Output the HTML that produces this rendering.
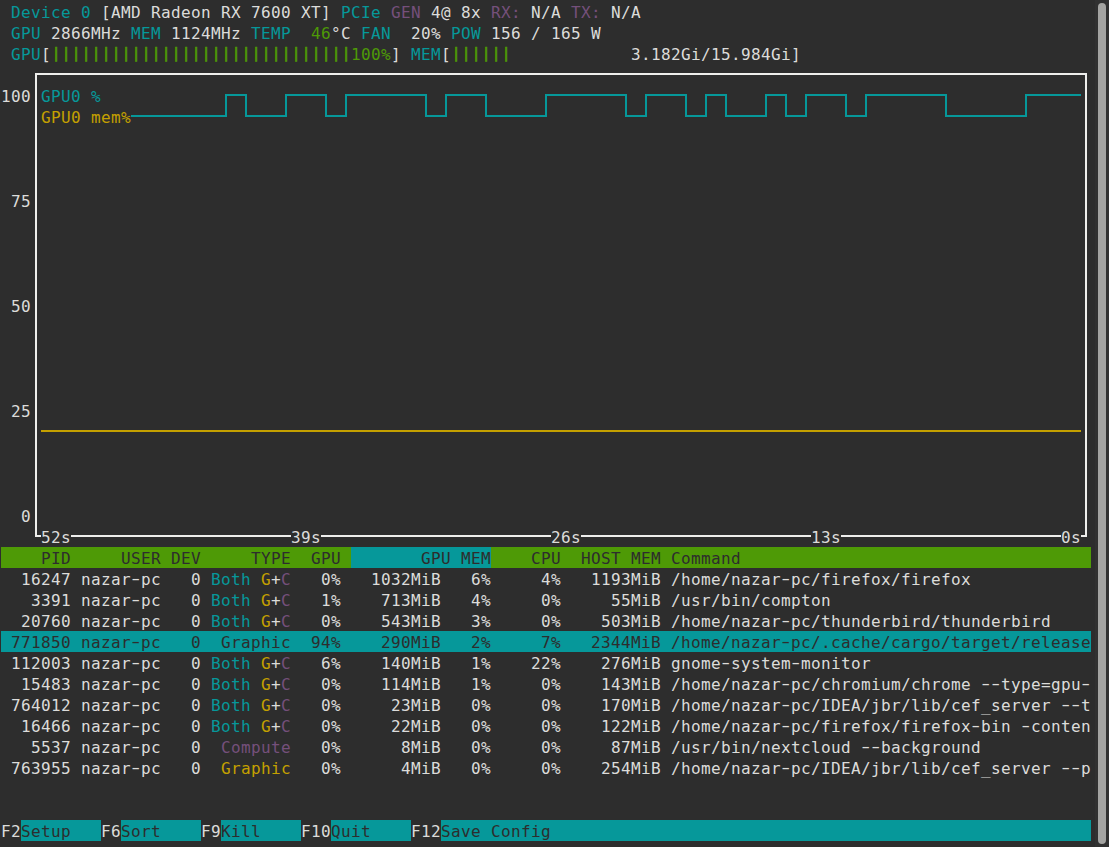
<!DOCTYPE html>
<html><head><meta charset="utf-8"><title>nvtop</title>
<style>
html,body{margin:0;padding:0;background:#2d2d2d;}
body{width:1109px;height:847px;position:relative;overflow:hidden;font-family:"DejaVu Sans Mono", "Liberation Mono", monospace;font-size:16px;}
.b{position:absolute;}
.t{position:absolute;white-space:pre;line-height:21px;height:21px;letter-spacing:0.3672px;font-family:"DejaVu Sans Mono", "Liberation Mono", monospace;font-size:16px;}
#plot{position:absolute;left:0;top:0;}
.t i{display:inline-block;font-style:normal;transform:translateY(-1px) scaleX(1.55);}
.bars{transform:translate(0.3px,-1.7px) scaleY(0.88);transform-origin:50% 50%;-webkit-text-stroke:0.7px currentColor;}
#trough{position:absolute;left:1095px;top:0;width:14px;height:847px;background:#313131;}
#thumb{position:absolute;left:1098px;top:3px;width:8px;height:841px;border-radius:4px;background:#a4a4a2;}
</style></head><body>
<svg id="plot" width="1109" height="847" viewBox="0 0 1109 847" shape-rendering="crispEdges">
<path d="M41 536 H36 V74 H1086 V536 H1081" fill="none" stroke="#eeeeec" stroke-width="2" stroke-linejoin="miter"/>
<path d="M71 536H291 M321 536H551 M581 536H811 M841 536H1061" fill="none" stroke="#eeeeec" stroke-width="2"/>
<path d="M41 431H1081" fill="none" stroke="#c4a000" stroke-width="2"/>
<path d="M131 116H226V95H246V116H286V95H326V116H346V95H426V116H446V95H486V116H546V95H626V116H646V95H686V116H706V95H726V116H766V95H786V116H806V95H846V116H866V95H946V116H1026V95H1081" fill="none" stroke="#06989a" stroke-width="2" stroke-linejoin="miter"/>
</svg>
<div id="trough"></div><div id="thumb"></div>
<span class="t" style="left:11px;top:2px;color:#06989a">Device 0</span>
<span class="t" style="left:101px;top:2px;color:#dcdcda">[AMD Radeon RX 7600 XT]</span>
<span class="t" style="left:341px;top:2px;color:#06989a">PCIe</span>
<span class="t" style="left:391px;top:2px;color:#75507b">GEN</span>
<span class="t" style="left:431px;top:2px;color:#dcdcda">4@ 8x</span>
<span class="t" style="left:491px;top:2px;color:#75507b">RX:</span>
<span class="t" style="left:531px;top:2px;color:#dcdcda">N/A</span>
<span class="t" style="left:571px;top:2px;color:#75507b">TX:</span>
<span class="t" style="left:611px;top:2px;color:#dcdcda">N/A</span>
<span class="t" style="left:11px;top:23px;color:#06989a">GPU</span>
<span class="t" style="left:51px;top:23px;color:#dcdcda">2866MHz</span>
<span class="t" style="left:131px;top:23px;color:#06989a">MEM</span>
<span class="t" style="left:171px;top:23px;color:#dcdcda">1124MHz</span>
<span class="t" style="left:251px;top:23px;color:#06989a">TEMP</span>
<span class="t" style="left:311px;top:23px;color:#4e9a06">46</span>
<span class="t" style="left:331px;top:23px;color:#dcdcda">°C</span>
<span class="t" style="left:361px;top:23px;color:#06989a">FAN</span>
<span class="t" style="left:411px;top:23px;color:#dcdcda">20%</span>
<span class="t" style="left:451px;top:23px;color:#06989a">POW</span>
<span class="t" style="left:491px;top:23px;color:#dcdcda">156 / 165 W</span>
<span class="t" style="left:11px;top:44px;color:#06989a">GPU</span>
<span class="t" style="left:41px;top:44px;color:#dcdcda">[</span>
<span class="t bars" style="left:51px;top:44px;color:#4e9a06">||||||||||||||||||||||||||||||</span>
<span class="t" style="left:351px;top:44px;color:#4e9a06">100%</span>
<span class="t" style="left:391px;top:44px;color:#dcdcda">]</span>
<span class="t" style="left:411px;top:44px;color:#06989a">MEM</span>
<span class="t" style="left:441px;top:44px;color:#dcdcda">[</span>
<span class="t bars" style="left:451px;top:44px;color:#4e9a06">||||||</span>
<span class="t" style="left:631px;top:44px;color:#dcdcda">3.182Gi/15.984Gi]</span>
<span class="t" style="left:1px;top:86px;color:#dcdcda">100</span>
<span class="t" style="left:11px;top:191px;color:#dcdcda">75</span>
<span class="t" style="left:11px;top:296px;color:#dcdcda">50</span>
<span class="t" style="left:11px;top:401px;color:#dcdcda">25</span>
<span class="t" style="left:21px;top:506px;color:#dcdcda">0</span>
<span class="t" style="left:41px;top:86px;color:#06989a">GPU0 %</span>
<span class="t" style="left:41px;top:107px;color:#c4a000">GPU0 mem%</span>
<span class="t" style="left:41px;top:527px;color:#dcdcda">52s</span>
<span class="t" style="left:291px;top:527px;color:#dcdcda">39s</span>
<span class="t" style="left:551px;top:527px;color:#dcdcda">26s</span>
<span class="t" style="left:811px;top:527px;color:#dcdcda">13s</span>
<span class="t" style="left:1061px;top:527px;color:#dcdcda">0s</span>
<div class="b" style="left:1px;top:547px;width:1090px;height:21px;background:#4e9a06"></div>
<div class="b" style="left:351px;top:547px;width:140px;height:21px;background:#06989a"></div>
<span class="t" style="left:41px;top:548px;color:#2d2d2d">PID</span>
<span class="t" style="left:121px;top:548px;color:#2d2d2d">USER</span>
<span class="t" style="left:171px;top:548px;color:#2d2d2d">DEV</span>
<span class="t" style="left:251px;top:548px;color:#2d2d2d">TYPE</span>
<span class="t" style="left:311px;top:548px;color:#2d2d2d">GPU</span>
<span class="t" style="left:421px;top:548px;color:#2d2d2d">GPU</span>
<span class="t" style="left:461px;top:548px;color:#2d2d2d">MEM</span>
<span class="t" style="left:531px;top:548px;color:#2d2d2d">CPU</span>
<span class="t" style="left:581px;top:548px;color:#2d2d2d">HOST</span>
<span class="t" style="left:631px;top:548px;color:#2d2d2d">MEM</span>
<span class="t" style="left:671px;top:548px;color:#2d2d2d">Command</span>
<span class="t" style="left:21px;top:569px;color:#dcdcda">16247</span>
<span class="t" style="left:81px;top:569px;color:#dcdcda">nazar<i>-</i>pc</span>
<span class="t" style="left:191px;top:569px;color:#dcdcda">0</span>
<span class="t" style="left:211px;top:569px;color:#06989a">Both</span>
<span class="t" style="left:261px;top:569px;color:#c4a000">G</span>
<span class="t" style="left:271px;top:569px;color:#dcdcda">+</span>
<span class="t" style="left:281px;top:569px;color:#75507b">C</span>
<span class="t" style="left:321px;top:569px;color:#dcdcda">0%</span>
<span class="t" style="left:371px;top:569px;color:#dcdcda">1032MiB</span>
<span class="t" style="left:471px;top:569px;color:#dcdcda">6%</span>
<span class="t" style="left:541px;top:569px;color:#dcdcda">4%</span>
<span class="t" style="left:591px;top:569px;color:#dcdcda">1193MiB</span>
<span class="t" style="left:671px;top:569px;color:#dcdcda">/home/nazar<i>-</i>pc/firefox/firefox</span>
<span class="t" style="left:31px;top:590px;color:#dcdcda">3391</span>
<span class="t" style="left:81px;top:590px;color:#dcdcda">nazar<i>-</i>pc</span>
<span class="t" style="left:191px;top:590px;color:#dcdcda">0</span>
<span class="t" style="left:211px;top:590px;color:#06989a">Both</span>
<span class="t" style="left:261px;top:590px;color:#c4a000">G</span>
<span class="t" style="left:271px;top:590px;color:#dcdcda">+</span>
<span class="t" style="left:281px;top:590px;color:#75507b">C</span>
<span class="t" style="left:321px;top:590px;color:#dcdcda">1%</span>
<span class="t" style="left:381px;top:590px;color:#dcdcda">713MiB</span>
<span class="t" style="left:471px;top:590px;color:#dcdcda">4%</span>
<span class="t" style="left:541px;top:590px;color:#dcdcda">0%</span>
<span class="t" style="left:611px;top:590px;color:#dcdcda">55MiB</span>
<span class="t" style="left:671px;top:590px;color:#dcdcda">/usr/bin/compton</span>
<span class="t" style="left:21px;top:611px;color:#dcdcda">20760</span>
<span class="t" style="left:81px;top:611px;color:#dcdcda">nazar<i>-</i>pc</span>
<span class="t" style="left:191px;top:611px;color:#dcdcda">0</span>
<span class="t" style="left:211px;top:611px;color:#06989a">Both</span>
<span class="t" style="left:261px;top:611px;color:#c4a000">G</span>
<span class="t" style="left:271px;top:611px;color:#dcdcda">+</span>
<span class="t" style="left:281px;top:611px;color:#75507b">C</span>
<span class="t" style="left:321px;top:611px;color:#dcdcda">0%</span>
<span class="t" style="left:381px;top:611px;color:#dcdcda">543MiB</span>
<span class="t" style="left:471px;top:611px;color:#dcdcda">3%</span>
<span class="t" style="left:541px;top:611px;color:#dcdcda">0%</span>
<span class="t" style="left:601px;top:611px;color:#dcdcda">503MiB</span>
<span class="t" style="left:671px;top:611px;color:#dcdcda">/home/nazar<i>-</i>pc/thunderbird/thunderbird</span>
<div class="b" style="left:1px;top:631px;width:1090px;height:21px;background:#06989a"></div>
<span class="t" style="left:11px;top:632px;color:#2d2d2d">771850</span>
<span class="t" style="left:81px;top:632px;color:#2d2d2d">nazar<i>-</i>pc</span>
<span class="t" style="left:191px;top:632px;color:#2d2d2d">0</span>
<span class="t" style="left:221px;top:632px;color:#2d2d2d">Graphic</span>
<span class="t" style="left:311px;top:632px;color:#2d2d2d">94%</span>
<span class="t" style="left:381px;top:632px;color:#2d2d2d">290MiB</span>
<span class="t" style="left:471px;top:632px;color:#2d2d2d">2%</span>
<span class="t" style="left:541px;top:632px;color:#2d2d2d">7%</span>
<span class="t" style="left:591px;top:632px;color:#2d2d2d">2344MiB</span>
<span class="t" style="left:671px;top:632px;color:#2d2d2d">/home/nazar<i>-</i>pc/.cache/cargo/target/release</span>
<span class="t" style="left:11px;top:653px;color:#dcdcda">112003</span>
<span class="t" style="left:81px;top:653px;color:#dcdcda">nazar<i>-</i>pc</span>
<span class="t" style="left:191px;top:653px;color:#dcdcda">0</span>
<span class="t" style="left:211px;top:653px;color:#06989a">Both</span>
<span class="t" style="left:261px;top:653px;color:#c4a000">G</span>
<span class="t" style="left:271px;top:653px;color:#dcdcda">+</span>
<span class="t" style="left:281px;top:653px;color:#75507b">C</span>
<span class="t" style="left:321px;top:653px;color:#dcdcda">6%</span>
<span class="t" style="left:381px;top:653px;color:#dcdcda">140MiB</span>
<span class="t" style="left:471px;top:653px;color:#dcdcda">1%</span>
<span class="t" style="left:531px;top:653px;color:#dcdcda">22%</span>
<span class="t" style="left:601px;top:653px;color:#dcdcda">276MiB</span>
<span class="t" style="left:671px;top:653px;color:#dcdcda">gnome<i>-</i>system<i>-</i>monitor</span>
<span class="t" style="left:21px;top:674px;color:#dcdcda">15483</span>
<span class="t" style="left:81px;top:674px;color:#dcdcda">nazar<i>-</i>pc</span>
<span class="t" style="left:191px;top:674px;color:#dcdcda">0</span>
<span class="t" style="left:211px;top:674px;color:#06989a">Both</span>
<span class="t" style="left:261px;top:674px;color:#c4a000">G</span>
<span class="t" style="left:271px;top:674px;color:#dcdcda">+</span>
<span class="t" style="left:281px;top:674px;color:#75507b">C</span>
<span class="t" style="left:321px;top:674px;color:#dcdcda">0%</span>
<span class="t" style="left:381px;top:674px;color:#dcdcda">114MiB</span>
<span class="t" style="left:471px;top:674px;color:#dcdcda">1%</span>
<span class="t" style="left:541px;top:674px;color:#dcdcda">0%</span>
<span class="t" style="left:601px;top:674px;color:#dcdcda">143MiB</span>
<span class="t" style="left:671px;top:674px;color:#dcdcda">/home/nazar<i>-</i>pc/chromium/chrome <i>-</i><i>-</i>type=gpu<i>-</i></span>
<span class="t" style="left:11px;top:695px;color:#dcdcda">764012</span>
<span class="t" style="left:81px;top:695px;color:#dcdcda">nazar<i>-</i>pc</span>
<span class="t" style="left:191px;top:695px;color:#dcdcda">0</span>
<span class="t" style="left:211px;top:695px;color:#06989a">Both</span>
<span class="t" style="left:261px;top:695px;color:#c4a000">G</span>
<span class="t" style="left:271px;top:695px;color:#dcdcda">+</span>
<span class="t" style="left:281px;top:695px;color:#75507b">C</span>
<span class="t" style="left:321px;top:695px;color:#dcdcda">0%</span>
<span class="t" style="left:391px;top:695px;color:#dcdcda">23MiB</span>
<span class="t" style="left:471px;top:695px;color:#dcdcda">0%</span>
<span class="t" style="left:541px;top:695px;color:#dcdcda">0%</span>
<span class="t" style="left:601px;top:695px;color:#dcdcda">170MiB</span>
<span class="t" style="left:671px;top:695px;color:#dcdcda">/home/nazar<i>-</i>pc/IDEA/jbr/lib/cef_server <i>-</i><i>-</i>t</span>
<span class="t" style="left:21px;top:716px;color:#dcdcda">16466</span>
<span class="t" style="left:81px;top:716px;color:#dcdcda">nazar<i>-</i>pc</span>
<span class="t" style="left:191px;top:716px;color:#dcdcda">0</span>
<span class="t" style="left:211px;top:716px;color:#06989a">Both</span>
<span class="t" style="left:261px;top:716px;color:#c4a000">G</span>
<span class="t" style="left:271px;top:716px;color:#dcdcda">+</span>
<span class="t" style="left:281px;top:716px;color:#75507b">C</span>
<span class="t" style="left:321px;top:716px;color:#dcdcda">0%</span>
<span class="t" style="left:391px;top:716px;color:#dcdcda">22MiB</span>
<span class="t" style="left:471px;top:716px;color:#dcdcda">0%</span>
<span class="t" style="left:541px;top:716px;color:#dcdcda">0%</span>
<span class="t" style="left:601px;top:716px;color:#dcdcda">122MiB</span>
<span class="t" style="left:671px;top:716px;color:#dcdcda">/home/nazar<i>-</i>pc/firefox/firefox<i>-</i>bin <i>-</i>conten</span>
<span class="t" style="left:31px;top:737px;color:#dcdcda">5537</span>
<span class="t" style="left:81px;top:737px;color:#dcdcda">nazar<i>-</i>pc</span>
<span class="t" style="left:191px;top:737px;color:#dcdcda">0</span>
<span class="t" style="left:221px;top:737px;color:#75507b">Compute</span>
<span class="t" style="left:321px;top:737px;color:#dcdcda">0%</span>
<span class="t" style="left:401px;top:737px;color:#dcdcda">8MiB</span>
<span class="t" style="left:471px;top:737px;color:#dcdcda">0%</span>
<span class="t" style="left:541px;top:737px;color:#dcdcda">0%</span>
<span class="t" style="left:611px;top:737px;color:#dcdcda">87MiB</span>
<span class="t" style="left:671px;top:737px;color:#dcdcda">/usr/bin/nextcloud <i>-</i><i>-</i>background</span>
<span class="t" style="left:11px;top:758px;color:#dcdcda">763955</span>
<span class="t" style="left:81px;top:758px;color:#dcdcda">nazar<i>-</i>pc</span>
<span class="t" style="left:191px;top:758px;color:#dcdcda">0</span>
<span class="t" style="left:221px;top:758px;color:#c4a000">Graphic</span>
<span class="t" style="left:321px;top:758px;color:#dcdcda">0%</span>
<span class="t" style="left:401px;top:758px;color:#dcdcda">4MiB</span>
<span class="t" style="left:471px;top:758px;color:#dcdcda">0%</span>
<span class="t" style="left:541px;top:758px;color:#dcdcda">0%</span>
<span class="t" style="left:601px;top:758px;color:#dcdcda">254MiB</span>
<span class="t" style="left:671px;top:758px;color:#dcdcda">/home/nazar<i>-</i>pc/IDEA/jbr/lib/cef_server <i>-</i><i>-</i>p</span>
<div class="b" style="left:21px;top:820px;width:80px;height:21px;background:#06989a"></div>
<div class="b" style="left:121px;top:820px;width:80px;height:21px;background:#06989a"></div>
<div class="b" style="left:221px;top:820px;width:80px;height:21px;background:#06989a"></div>
<div class="b" style="left:331px;top:820px;width:80px;height:21px;background:#06989a"></div>
<div class="b" style="left:441px;top:820px;width:650px;height:21px;background:#06989a"></div>
<span class="t" style="left:1px;top:821px;color:#dcdcda">F2</span>
<span class="t" style="left:21px;top:821px;color:#2d2d2d">Setup</span>
<span class="t" style="left:101px;top:821px;color:#dcdcda">F6</span>
<span class="t" style="left:121px;top:821px;color:#2d2d2d">Sort</span>
<span class="t" style="left:201px;top:821px;color:#dcdcda">F9</span>
<span class="t" style="left:221px;top:821px;color:#2d2d2d">Kill</span>
<span class="t" style="left:301px;top:821px;color:#dcdcda">F10</span>
<span class="t" style="left:331px;top:821px;color:#2d2d2d">Quit</span>
<span class="t" style="left:411px;top:821px;color:#dcdcda">F12</span>
<span class="t" style="left:441px;top:821px;color:#2d2d2d">Save Config</span>
</body></html>
